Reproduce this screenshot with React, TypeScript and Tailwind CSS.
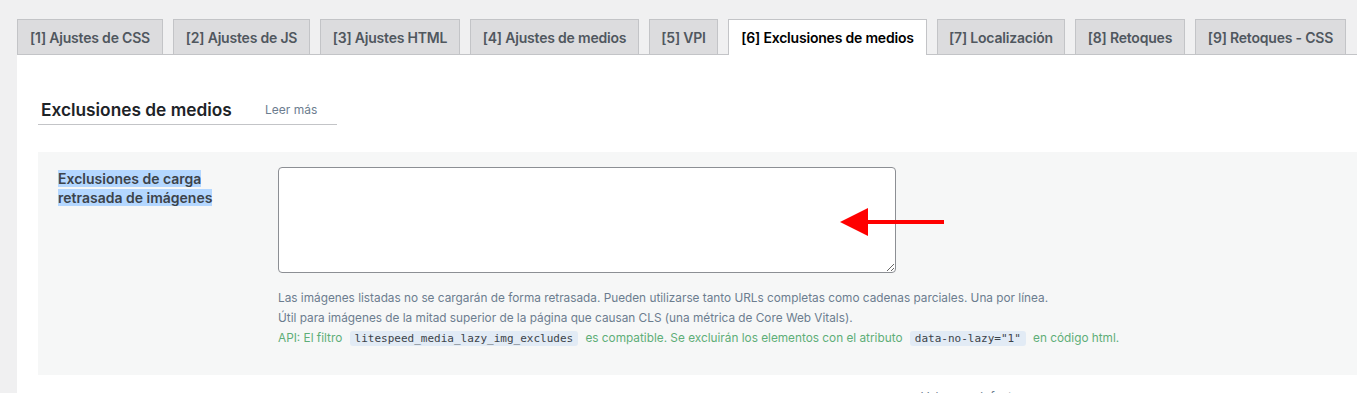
import React from 'react'

const tabs = [
  { label: '[1] Ajustes de CSS', w: 'w-[146px]' },
  { label: '[2] Ajustes de JS', w: 'w-[137px]' },
  { label: '[3] Ajustes HTML', w: 'w-[140px]' },
  { label: '[4] Ajustes de medios', w: 'w-[169px]' },
  { label: '[5] VPI', w: 'w-[69px]' },
  { label: '[6] Exclusiones de medios', w: 'w-[199px]' },
  { label: '[7] Localización', w: 'w-[128px]' },
  { label: '[8] Retoques', w: 'w-[110px]' },
  { label: '[9] Retoques - CSS', w: 'w-[151px]' },
]

const ACTIVE = 5

function Code({ children }: { children: React.ReactNode }) {
  return (
    <code className="mx-[4px] rounded-[3px] bg-[#e2ebf5] px-[5px] py-[1px] font-['DejaVu_Sans_Mono',monospace] text-[11px] text-[#3c434a]">
      {children}
    </code>
  )
}

export default function App() {
  return (
    <div className="h-[393px] overflow-hidden bg-[#f0f0f1] pl-[17px] pt-[19px] font-['Inter',sans-serif]">
      {/* Tabs */}
      <nav className="flex gap-[10px] border-b border-[#c3c4c7]">
        {tabs.map((t, i) => (
          <div
            key={t.label}
            className={
              i === ACTIVE
                ? `${t.w} -mb-px flex h-[36px] shrink-0 items-center justify-center whitespace-nowrap border border-b-0 border-[#c3c4c7] bg-white text-[14px] font-semibold tracking-[-0.2px] text-black`
                : `${t.w} flex h-[35px] shrink-0 items-center justify-center whitespace-nowrap border border-b-0 border-[#c3c4c7] bg-[#dcdcde] text-[14px] font-semibold tracking-[-0.2px] text-[#50575e]`
            }
          >
            {t.label}
          </div>
        ))}
      </nav>

      <div className="bg-white pl-[21px] pt-[43px]">
        {/* Heading */}
        <div className="flex w-[299px] items-center border-b border-[#c3c4c7] pb-[2px] pl-[3px]">
          <h3 className="w-[224px] text-[17.3px] font-semibold leading-[24px] text-[#1d2327]">Exclusiones de medios</h3>
          <a className="text-[12px] text-[#6c7d8f]">Leer más</a>
        </div>

        {/* Settings row */}
        <div className="mt-[27px] flex bg-[#f6f7f7] pb-[26px] pl-[20px] pt-[15px]">
          <div className="w-[220px] pt-[2px] text-[14px] font-semibold leading-[19px] text-[#3c434a]">
            <span className="bg-[#b4d7ff]">Exclusiones de carga</span>
            <br />
            <span className="bg-[#b4d7ff]">retrasada de imágenes</span>
          </div>
          <div>
            <div className="relative">
              <textarea className="block h-[106px] w-[618px] resize-y rounded-[4px] border border-[#8c8f94] bg-white" />
              <svg
                className="absolute left-[562px] top-[41px]"
                width="104"
                height="28"
                viewBox="0 0 104 28"
              >
                <polygon points="0,14 28,0 28,28" fill="#ff0000" />
                <rect x="27" y="12" width="77" height="4" fill="#ff0000" />
              </svg>
            </div>
            <div className="mt-[15px] text-[11.8px] leading-[20px] text-[#6c7d8f]">
              <p>
                Las imágenes listadas no se cargarán de forma retrasada. Pueden utilizarse tanto URLs completas como
                cadenas parciales. Una por línea.
              </p>
              <p>Útil para imágenes de la mitad superior de la página que causan CLS (una métrica de Core Web Vitals).</p>
              <p className="text-[#5eae78]">
                API: El filtro <Code>litespeed_media_lazy_img_excludes</Code> es compatible. Se excluirán los elementos
                con el atributo <Code>data-no-lazy="1"</Code> en código html.
              </p>
            </div>
          </div>
        </div>

        <div className="pl-[883px] pt-[13px] text-[12px] text-[#6c7d8f]">Valor por defecto:</div>
      </div>
    </div>
  )
}
